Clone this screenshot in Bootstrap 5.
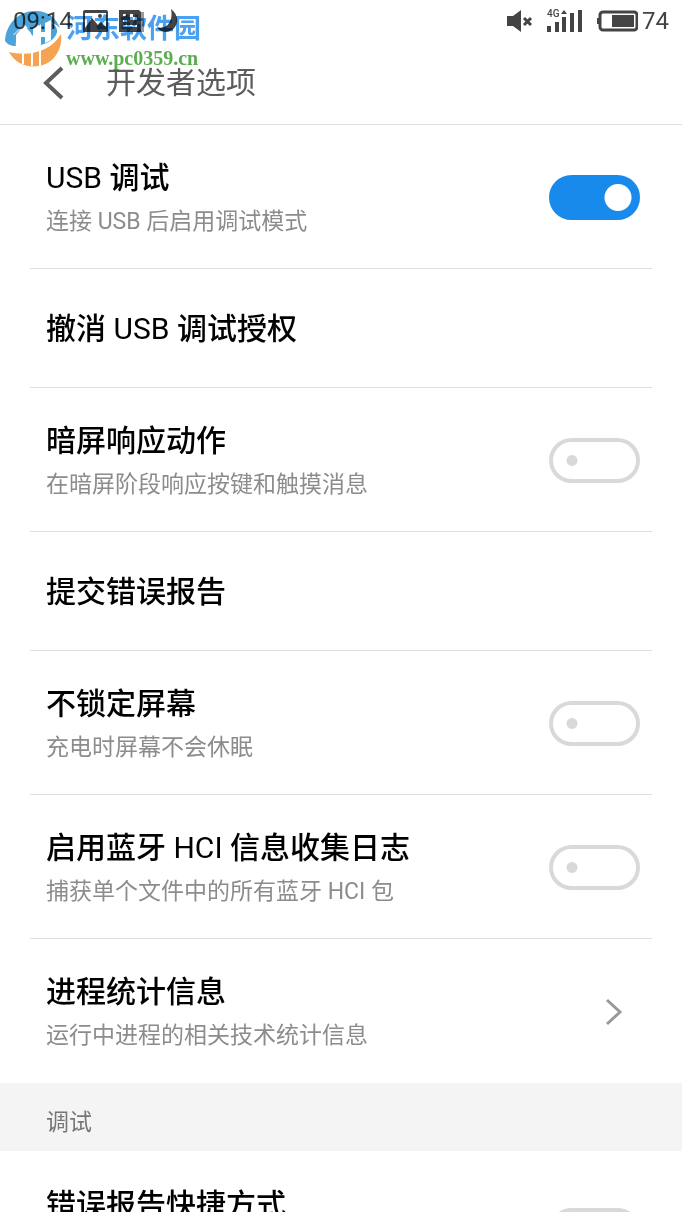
<!DOCTYPE html>
<html lang="zh-CN">
<head>
<meta charset="utf-8">
<meta name="viewport" content="width=device-width, initial-scale=1">
<title>开发者选项</title>
<link href="https://cdn.jsdelivr.net/npm/bootstrap@5.3.0/dist/css/bootstrap.min.css" rel="stylesheet">
<style>
  body { font-family: Roboto, "Noto Sans CJK SC", sans-serif; background: #fff; color: #000; }
  .status { height: 42px; padding: 0 13px; color: #444; font-size: 24px; line-height: 42px; }
  .title-bar { height: 83px; padding: 0 40px; border-bottom: 1px solid #dedede; color: #5c5c5c; }
  .title-bar h1 { font-size: 30px; line-height: 40px; margin-left: 38px; }
  .back svg { display: block; }
  .option-list { margin: 0 30px; }
  .option { height: 144px; padding: 2px 12px 0 16px; border-bottom: 1px solid #dedede; }
  .option.single { height: 119px; }
  .option.tall { height: 158px; }
  .option.final { border-bottom-color: transparent; }
  .option-name { font-size: 30px; line-height: 40px; font-weight: 500; }
  .option-name .latin { font-weight: 400; }
  .option-hint { font-size: 23px; line-height: 32px; font-weight: 400; margin-top: 8px; color: #8c8c8c; }
  .section-name { height: 68px; padding: 12px 46px 0; background: #f4f4f4; color: #777; font-size: 23px; }
  .form-check-input.toggle {
    width: 91px; height: 45px; margin: 0; flex: none; border: 4px solid #d9d9d9; border-radius: 23px;
    background: radial-gradient(circle at 23px 50%, #d9d9d9 5px, transparent 6px) border-box #fff;
  }
  .form-check-input.toggle:checked {
    border-color: #188aec;
    background: radial-gradient(circle at 69px 50%, #fff 13px, transparent 14px) border-box #188aec;
  }
  .watermark { left: 4px; top: 10px; mix-blend-mode: multiply; pointer-events: none; }
  .mark-name { font-size: 27px; line-height: 38px; font-weight: 700; color: #4ba0f0; }
  .mark-url { font-family: "Liberation Serif", serif; font-size: 20px; line-height: 20px; font-weight: 700; color: #5cad50; }
</style>
</head>
<body>
<div class="vh-100 overflow-hidden position-relative">
  <div class="status d-flex justify-content-between">
    <div class="d-flex align-items-center">
      <span>09:14</span>
      <svg class="ms-2" width="98" height="26" viewBox="0 0 98 26" fill="#444" aria-hidden="true">
        <path fill-rule="evenodd" d="M4 2h21a2 2 0 0 1 2 2v19a1 1 0 0 1-1 1H3a1 1 0 0 1-1-1V4a2 2 0 0 1 2-2zm0 3v15l7-10 6 7 3-3 5 5V5z"/><circle cx="19" cy="8" r="2"/>
        <path fill-rule="evenodd" d="M38 2h20l2 2v20H38zm4 4v2h3V6zm7 0v6h7v-3h-4V6zm-7 6v2h4v-2zm0 5v2h14v-2z"/><path d="M60 4h3v20h-3z" fill="#999"/>
        <path d="M90 1c8 6 8 16 1 21-6 4-13 1-15-3 8 3 17-4 14-18z"/>
      </svg>
    </div>
    <div class="d-flex align-items-center">
      <svg width="134" height="26" viewBox="0 0 134 26" fill="#444" aria-hidden="true">
        <path d="M3 8h6l8-6v22l-8-6H3z"/><path d="m20 10 7 7m0-7-7 7" stroke="#444" stroke-width="3"/>
        <text x="43" y="9" font-size="10" font-weight="500">4G</text>
        <path d="M43 18h4v6h-4zm8-4h4v10h-4zm7-5h4v15h-4zm8-4h4v19h-4zm8-3h4v22h-4zM57 6l3-4 3 4z"/>
        <rect x="96" y="4" width="37" height="18" rx="3" fill="none" stroke="#444" stroke-width="3"/>
        <path d="M93 10h3v6h-3zM108 7h22v12h-22z"/>
      </svg>
      <span class="ms-1">74</span>
    </div>
  </div>
  <header class="title-bar d-flex align-items-center">
    <button class="back btn p-0 border-0" type="button" aria-label="返回">
      <svg width="28" height="34" viewBox="0 0 28 34" fill="none" stroke="#5c5c5c" stroke-width="4"><path d="M22 2 6 17l16 15"/></svg>
    </button>
    <h1 class="mb-0 fw-normal">开发者选项</h1>
  </header>
  <main>
    <div class="option-list">
      <div class="option d-flex align-items-center justify-content-between">
        <label for="usb"><span class="option-name d-block"><span class="latin">USB</span> 调试</span><span class="option-hint d-block">连接 USB 后启用调试模式</span></label>
        <input class="form-check-input toggle" type="checkbox" role="switch" id="usb" checked>
      </div>
      <div class="option single d-flex align-items-center"><a href="#" class="option-name text-reset text-decoration-none">撤消 <span class="latin">USB</span> 调试授权</a></div>
      <div class="option d-flex align-items-center justify-content-between">
        <label for="gesture"><span class="option-name d-block">暗屏响应动作</span><span class="option-hint d-block">在暗屏阶段响应按键和触摸消息</span></label>
        <input class="form-check-input toggle" type="checkbox" role="switch" id="gesture">
      </div>
      <div class="option single d-flex align-items-center"><a href="#" class="option-name text-reset text-decoration-none">提交错误报告</a></div>
      <div class="option d-flex align-items-center justify-content-between">
        <label for="awake"><span class="option-name d-block">不锁定屏幕</span><span class="option-hint d-block">充电时屏幕不会休眠</span></label>
        <input class="form-check-input toggle" type="checkbox" role="switch" id="awake">
      </div>
      <div class="option d-flex align-items-center justify-content-between">
        <label for="hci"><span class="option-name d-block">启用蓝牙 <span class="latin">HCI</span> 信息收集日志</span><span class="option-hint d-block">捕获单个文件中的所有蓝牙 HCI 包</span></label>
        <input class="form-check-input toggle" type="checkbox" role="switch" id="hci">
      </div>
      <a href="#" class="option final d-flex align-items-center justify-content-between text-reset text-decoration-none">
        <span><span class="option-name d-block">进程统计信息</span><span class="option-hint d-block">运行中进程的相关技术统计信息</span></span>
        <svg class="me-3" width="20" height="28" viewBox="0 0 20 28" fill="none" stroke="#999" stroke-width="3" aria-hidden="true"><path d="m3 2 13 12L3 26"/></svg>
      </a>
    </div>
    <h2 class="section-name d-flex align-items-center fw-normal mb-0">调试</h2>
    <div class="option-list">
      <div class="option tall d-flex align-items-center justify-content-between">
        <label class="option-name align-self-start pt-3 mt-3" for="shortcut">错误报告快捷方式</label>
        <input class="form-check-input toggle" type="checkbox" role="switch" id="shortcut">
      </div>
    </div>
  </main>
  <div class="watermark position-absolute d-flex">
    <svg width="58" height="58" viewBox="0 0 58 58" aria-hidden="true">
      <path d="M1 31C2 12 17 0 32 1c12 0 20 7 24 17-7-7-15-7-22-3-14 5-24 13-22 21-5 0-9-2-11-5z" fill="#4ba3da"/>
      <path d="M12 35V25H9l11-11 6 6v15h-6v-9h-3v9z" fill="#fff"/>
      <path d="M12 35c-3-9 10-19 26-23 8-1 14 2 15 8 1 7-8 13-16 15V17l-3-2-5 3v8l-4-4-5-7-10 10h3z" fill="#4ba3da"/>
      <path d="M12 25 20 15l7 8v12h-6V25h-4v11h-5zM31 20l6-6v18l-5 3zm10 4V13l6-3v20l-6 3zm-4-2h4v5h-4z" fill="#fff"/>
      <path d="M57 24c2 16-8 30-22 32-13 2-24-3-30-14 20 5 43-1 52-18z" fill="#f5a350"/>
      <path d="M19 42v12M28 42v14M36 40v16" stroke="#fff" stroke-width="2"/>
    </svg>
    <div class="ps-1"><div class="mark-name">河东软件园</div><div class="mark-url">www.pc0359.cn</div></div>
  </div>
</div>
<script src="https://cdn.jsdelivr.net/npm/bootstrap@5.3.0/dist/js/bootstrap.bundle.min.js"></script>
</body>
</html>
